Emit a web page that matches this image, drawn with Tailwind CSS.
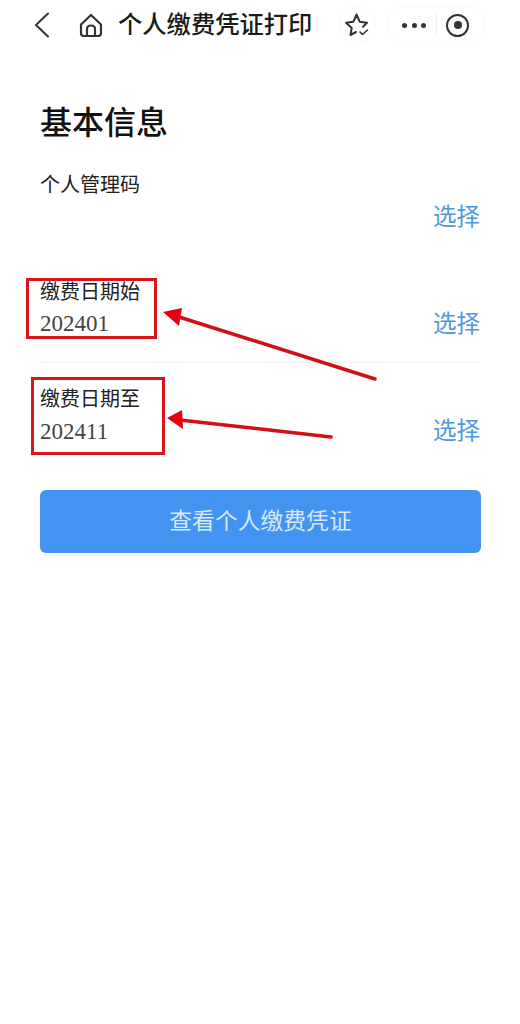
<!DOCTYPE html>
<html lang="zh-CN">
<head>
  <meta charset="UTF-8" />
  <title>个人缴费凭证打印</title>
  <script src="https://cdn.jsdelivr.net/npm/@tailwindcss/browser@4"></script>
</head>
<body class="bg-white">
  <div class="relative w-[520px] h-[1024px] overflow-hidden bg-white font-['Liberation_Sans','Noto_Sans_CJK_SC',sans-serif]">

    <!-- top bar -->
    <header class="flex items-center h-[50px]">
      <svg class="ml-[33px] w-[18px] h-[26px] text-[#333]" viewBox="0 0 18 26" fill="none" stroke="currentColor" stroke-width="2" stroke-linecap="round" stroke-linejoin="round">
        <path d="M15 1.5 L3 13 L15 24.5" />
      </svg>
      <svg class="ml-[28px] w-[24px] h-[24px] text-[#333]" viewBox="0 0 24 24" fill="none" stroke="currentColor" stroke-width="2.2" stroke-linecap="round" stroke-linejoin="round">
        <path d="M2 11.5 L12 2 L22 11.5 V20 Q22 23 19 23 H5 Q2 23 2 20 Z" />
        <path d="M8 23 V16 Q8 12.5 12 12.5 Q16 12.5 16 16 V23" />
      </svg>
      <h1 class="ml-[15px] w-[200px] text-[24.3px] leading-[30px] font-medium text-[#1a1a1a] whitespace-nowrap">个人缴费凭证打印</h1>

      <div class="ml-[20px] flex items-center justify-center w-[38px] h-[38px] rounded-full border border-[#f9f9f9]">
        <svg class="w-[26px] h-[26px] text-[#333]" viewBox="0 0 26 26" fill="none" stroke="currentColor" stroke-width="2" stroke-linecap="round" stroke-linejoin="round">
          <path d="M12 20 L6.5 23 L7.7 16 L2 10.8 L9.3 9.8 L12.5 2.5 L15.8 9.8 L23 10.8 L19 14.8" />
          <path d="M16 20 L18.5 22.5 L23.5 18" stroke-width="1.6" />
        </svg>
      </div>

      <div class="ml-[10px] flex items-center w-[100px] h-[38px] rounded-full border border-[#f9f9f9]">
        <div class="ml-[15px] flex items-center gap-[4.5px] w-[34px]">
          <span class="w-[5px] h-[5px] rounded-full bg-[#333]"></span>
          <span class="w-[5px] h-[5px] rounded-full bg-[#333]"></span>
          <span class="w-[5px] h-[5px] rounded-full bg-[#333]"></span>
        </div>
        <span class="w-px h-[24px] bg-[#f0f0f0]"></span>
        <span class="ml-[9px] flex items-center justify-center w-[23px] h-[23px] rounded-full border-[2.5px] border-[#333]">
          <span class="w-[8px] h-[8px] rounded-full bg-[#333]"></span>
        </span>
      </div>
    </header>

    <!-- form -->
    <main class="px-10 pt-[51px]">
      <h2 class="text-[32px] leading-[44px] font-medium text-[#111]">基本信息</h2>

      <section class="mt-[3px] pt-[22px] pb-[23px]">
        <div class="text-[20px] leading-[30px] text-[#222]">个人管理码</div>
        <div class="flex items-center justify-between h-[32px]">
          <span></span>
          <span class="pt-[3px] text-[23.5px] text-[#4f97dc]">选择</span>
        </div>
      </section>

      <section class="pt-[22px] pb-[23px] border-b border-[#f4f4f4]">
        <div class="text-[20px] leading-[30px] text-[#222]">缴费日期始</div>
        <div class="flex items-center justify-between h-[32px]">
          <span class="pt-[2px] font-['Liberation_Serif',serif] text-[23px] text-[#444]">202401</span>
          <span class="pt-[3px] text-[23.5px] text-[#4f97dc]">选择</span>
        </div>
      </section>

      <section class="pt-[21px] pb-[24px]">
        <div class="text-[20px] leading-[30px] text-[#222]">缴费日期至</div>
        <div class="flex items-center justify-between h-[32px]">
          <span class="pt-[4px] font-['Liberation_Serif',serif] text-[23px] text-[#444]">202411</span>
          <span class="pt-[3px] text-[23.5px] text-[#4f97dc]">选择</span>
        </div>
      </section>

      <button class="mt-[20px] w-[441px] h-[63px] rounded-[6px] bg-[#4394f2] text-[22.8px] text-[#d9e9fb]">查看个人缴费凭证</button>
    </main>

    <!-- red annotations drawn over the screenshot -->
    <div class="absolute left-[26px] top-[278px] w-[131px] h-[61px] border-[3px] border-[#d8141c]"></div>
    <div class="absolute left-[31px] top-[377px] w-[134px] h-[78px] border-[3px] border-[#d8141c]"></div>
    <svg class="absolute left-0 top-0 w-[520px] h-[1024px] pointer-events-none" viewBox="0 0 520 1024" fill="none">
      <path d="M375 379 L176 316" stroke="#d01018" stroke-width="3.5" stroke-linecap="round" />
      <path d="M163 312 L182 308 L179 326 Z" fill="#e8000f" />
      <path d="M331 437 L180 420" stroke="#d01018" stroke-width="3.5" stroke-linecap="round" />
      <path d="M167 418 L182 410 L183 429 Z" fill="#e8000f" />
    </svg>
  </div>
</body>
</html>
